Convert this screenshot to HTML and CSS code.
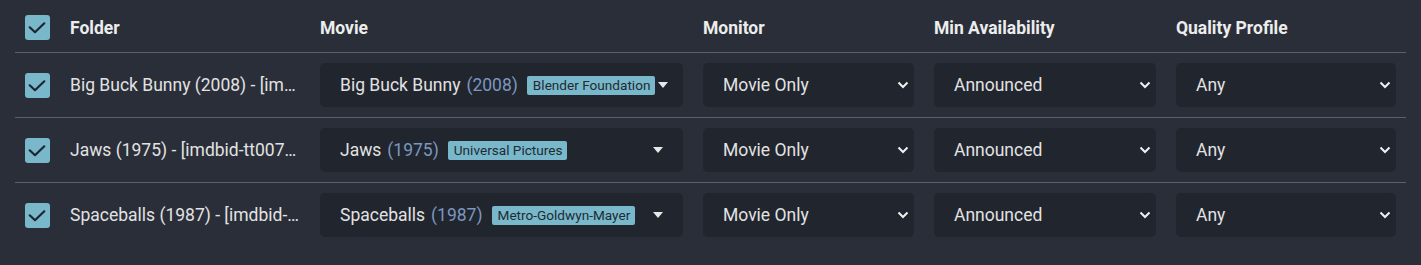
FILE: index.html
```html
<!DOCTYPE html>
<html>
<head>
<meta charset="utf-8">
<link rel="stylesheet" href="styles.css">
</head>
<body>
<div class="table">
  <div class="row head">
    <div class="cell"><span class="checkbox"><svg viewBox="0 0 25 25" width="25" height="25"><path d="M4.7 12.3 L10 17.2 L19.3 8.3" /></svg></span></div>
    <div class="cell th">Folder</div>
    <div class="cell th">Movie</div>
    <div class="cell th">Monitor</div>
    <div class="cell th">Min Availability</div>
    <div class="cell th">Quality Profile</div>
  </div>

  <div class="row">
    <div class="cell"><span class="checkbox"><svg viewBox="0 0 25 25" width="25" height="25"><path d="M4.7 12.3 L10 17.2 L19.3 8.3" /></svg></span></div>
    <div class="cell folder">Big Buck Bunny (2008) - [imdbid-tt1254207]</div>
    <div class="cell"><div class="select movie"><span class="movie-label"><span class="title">Big Buck Bunny</span><span class="year">(2008)</span><span class="chip">Blender Foundation</span></span><span class="caret"></span></div></div>
    <div class="cell"><div class="select"><span>Movie Only</span><svg class="chev" viewBox="0 0 12 8" width="12" height="8"><path d="M1.5 1.5 L6 6 L10.5 1.5"/></svg></div></div>
    <div class="cell"><div class="select"><span>Announced</span><svg class="chev" viewBox="0 0 12 8" width="12" height="8"><path d="M1.5 1.5 L6 6 L10.5 1.5"/></svg></div></div>
    <div class="cell"><div class="select"><span>Any</span><svg class="chev" viewBox="0 0 12 8" width="12" height="8"><path d="M1.5 1.5 L6 6 L10.5 1.5"/></svg></div></div>
  </div>

  <div class="row">
    <div class="cell"><span class="checkbox"><svg viewBox="0 0 25 25" width="25" height="25"><path d="M4.7 12.3 L10 17.2 L19.3 8.3" /></svg></span></div>
    <div class="cell folder">Jaws (1975) - [imdbid-tt0073195]</div>
    <div class="cell"><div class="select movie"><span class="movie-label"><span class="title">Jaws</span><span class="year">(1975)</span><span class="chip">Universal Pictures</span></span><span class="caret"></span></div></div>
    <div class="cell"><div class="select"><span>Movie Only</span><svg class="chev" viewBox="0 0 12 8" width="12" height="8"><path d="M1.5 1.5 L6 6 L10.5 1.5"/></svg></div></div>
    <div class="cell"><div class="select"><span>Announced</span><svg class="chev" viewBox="0 0 12 8" width="12" height="8"><path d="M1.5 1.5 L6 6 L10.5 1.5"/></svg></div></div>
    <div class="cell"><div class="select"><span>Any</span><svg class="chev" viewBox="0 0 12 8" width="12" height="8"><path d="M1.5 1.5 L6 6 L10.5 1.5"/></svg></div></div>
  </div>

  <div class="row">
    <div class="cell"><span class="checkbox"><svg viewBox="0 0 25 25" width="25" height="25"><path d="M4.7 12.3 L10 17.2 L19.3 8.3" /></svg></span></div>
    <div class="cell folder">Spaceballs (1987) - [imdbid-tt0094012]</div>
    <div class="cell"><div class="select movie"><span class="movie-label"><span class="title">Spaceballs</span><span class="year">(1987)</span><span class="chip">Metro-Goldwyn-Mayer</span></span><span class="caret"></span></div></div>
    <div class="cell"><div class="select"><span>Movie Only</span><svg class="chev" viewBox="0 0 12 8" width="12" height="8"><path d="M1.5 1.5 L6 6 L10.5 1.5"/></svg></div></div>
    <div class="cell"><div class="select"><span>Announced</span><svg class="chev" viewBox="0 0 12 8" width="12" height="8"><path d="M1.5 1.5 L6 6 L10.5 1.5"/></svg></div></div>
    <div class="cell"><div class="select"><span>Any</span><svg class="chev" viewBox="0 0 12 8" width="12" height="8"><path d="M1.5 1.5 L6 6 L10.5 1.5"/></svg></div></div>
  </div>
</div>
</body>
</html>
```

FILE: styles.css
```css
html, body {
  margin: 0;
  padding: 0;
  background: #2a2e38;
}
body {
  font-family: Roboto, "Liberation Sans", sans-serif;
  font-size: 17.5px;
  color: #e1e2e3;
  height: 265px;
  overflow: hidden;
}
.table {
  margin-left: 15px;
  width: 1391px;
}
.row {
  display: grid;
  grid-template-columns: 45px 250px 383px 231px 242px 240px;
  align-items: center;
  border-top: 1px solid #5b5f68;
  padding: 10px 0;
}
.row.head {
  border-top: none;
  padding: 15px 0 12px;
  height: 25px;
}
.cell {
  padding: 0 10px;
  min-width: 0;
  display: flex;
  align-items: center;
}
.th {
  font-weight: 700;
  color: #eceded;
}
.checkbox {
  display: block;
  width: 25px;
  height: 25px;
  border-radius: 3px;
  background: #78b8ca;
}
.checkbox svg {
  display: block;
  fill: none;
  stroke: #1f2530;
  stroke-width: 2.2;
  stroke-linecap: round;
  stroke-linejoin: round;
}
.folder {
  display: block;
  white-space: nowrap;
  overflow: hidden;
  text-overflow: ellipsis;
  line-height: 44px;
}
.select {
  flex: 1;
  min-width: 0;
  height: 44px;
  box-sizing: border-box;
  background: #21252d;
  border-radius: 5px;
  display: flex;
  align-items: center;
  justify-content: space-between;
  padding: 0 5px 0 20px;
  white-space: nowrap;
}
.select.movie {
  padding: 0 20px 0 20px;
  justify-content: flex-start;
}
.movie-label {
  flex: 1 0 auto;
  display: flex;
  align-items: center;
}
.year {
  color: #7b97c0;
  margin-left: 6px;
}
.chip {
  margin-left: 9px;
  background: #78b8ca;
  color: #232a33;
  font-size: 13.6px;
  line-height: 17px;
  padding: 1px 5px 1px 6px;
  border-radius: 2px;
}
.caret {
  flex: none;
  margin-left: 3px;
  width: 0;
  height: 0;
  border-left: 5.5px solid transparent;
  border-right: 5.5px solid transparent;
  border-top: 6px solid #e6e7e8;
}
.chev {
  display: block;
  fill: none;
  stroke: #f0f0f0;
  stroke-width: 2;
}
```
